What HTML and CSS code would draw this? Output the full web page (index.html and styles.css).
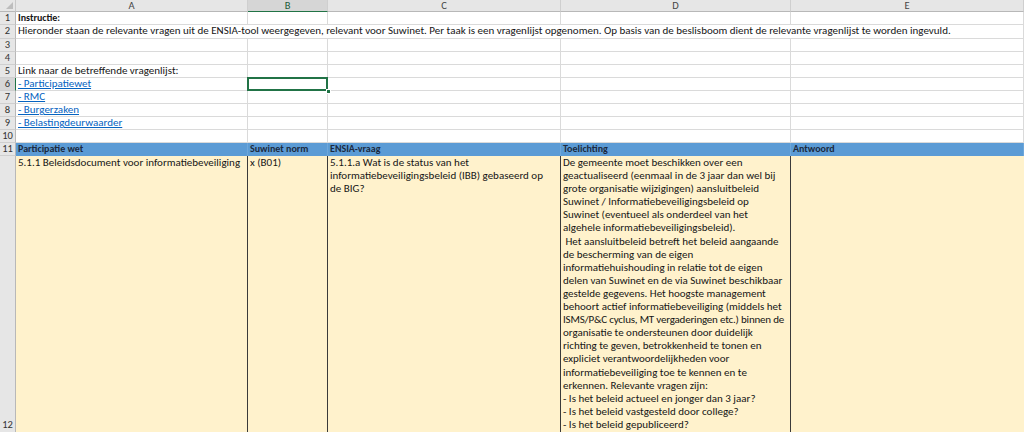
FILE: index.html
```html
<!DOCTYPE html>
<html lang="nl">
<head>
<meta charset="utf-8">
<title>ENSIA Suwinet</title>
<link rel="stylesheet" href="styles.css">
</head>
<body>
<div class="sheet">
  <div class="corner"><span class="tri"></span></div>
  <div class="ch">A</div>
  <div class="ch ch-sel">B</div>
  <div class="ch">C</div>
  <div class="ch">D</div>
  <div class="ch">E</div>

  <div class="rh">1</div>
  <div class="c bold">Instructie:</div><div class="c"></div><div class="c"></div><div class="c"></div><div class="c"></div>

  <div class="rh">2</div>
  <div class="c span">Hieronder staan de relevante vragen uit de ENSIA-tool weergegeven, relevant voor Suwinet. Per taak is een vragenlijst opgenomen. Op basis van de beslisboom dient de relevante vragenlijst te worden ingevuld.</div>

  <div class="rh">3</div>
  <div class="c"></div><div class="c"></div><div class="c"></div><div class="c"></div><div class="c"></div>

  <div class="rh">4</div>
  <div class="c"></div><div class="c"></div><div class="c"></div><div class="c"></div><div class="c"></div>

  <div class="rh">5</div>
  <div class="c">Link naar de betreffende vragenlijst:</div><div class="c"></div><div class="c"></div><div class="c"></div><div class="c"></div>

  <div class="rh rh-sel">6</div>
  <div class="c"><a class="link" href="#p">- Participatiewet</a></div><div class="c active"><span class="handle"></span></div><div class="c"></div><div class="c"></div><div class="c"></div>

  <div class="rh">7</div>
  <div class="c"><a class="link" href="#r">- RMC</a></div><div class="c"></div><div class="c"></div><div class="c"></div><div class="c"></div>

  <div class="rh">8</div>
  <div class="c"><a class="link" href="#b">- Burgerzaken</a></div><div class="c"></div><div class="c"></div><div class="c"></div><div class="c"></div>

  <div class="rh">9</div>
  <div class="c"><a class="link" href="#d">- Belastingdeurwaarder</a></div><div class="c"></div><div class="c"></div><div class="c"></div><div class="c"></div>

  <div class="rh">10</div>
  <div class="c"></div><div class="c"></div><div class="c"></div><div class="c"></div><div class="c"></div>

  <div class="rh">11</div>
  <div class="c hd">Participatie wet</div><div class="c hd">Suwinet norm</div><div class="c hd">ENSIA-vraag</div><div class="c hd">Toelichting</div><div class="c hd">Antwoord</div>

  <div class="rh rh-big">12</div>
  <div class="c data">5.1.1 Beleidsdocument voor informatiebeveiliging</div>
  <div class="c data">x (B01)</div>
  <div class="c data">5.1.1.a Wat is de status van het<br>informatiebeveiligingsbeleid (IBB) gebaseerd op<br>de BIG?</div>
  <div class="c data">De gemeente moet beschikken over een<br>geactualiseerd (eenmaal in de 3 jaar dan wel bij<br>grote organisatie wijzigingen) aansluitbeleid<br>Suwinet / Informatiebeveiligingsbeleid op<br>Suwinet (eventueel als onderdeel van het<br>algehele informatiebeveiligingsbeleid).<br>&nbsp;Het aansluitbeleid betreft het beleid aangaande<br>de bescherming van de eigen<br>informatiehuishouding in relatie tot de eigen<br>delen van Suwinet en de via Suwinet beschikbaar<br>gestelde gegevens. Het hoogste management<br>behoort actief informatiebeveiliging (middels het<br><span class="tight">ISMS/P&amp;C cyclus, MT vergaderingen etc.) binnen de</span><br>organisatie te ondersteunen door duidelijk<br>richting te geven, betrokkenheid te tonen en<br>expliciet verantwoordelijkheden voor<br>informatiebeveiliging toe te kennen en te<br>erkennen. Relevante vragen zijn:<br>- Is het beleid actueel en jonger dan 3 jaar?<br>- Is het beleid vastgesteld door college?<br>- Is het beleid gepubliceerd?</div>
  <div class="c data last"></div>
</div>
</body>
</html>
```

FILE: styles.css
```css
* { box-sizing: border-box; }

html, body {
  margin: 0;
  padding: 0;
  background: #ffffff;
  overflow: hidden;
}

body {
  font-family: Carlito, Calibri, Lato, sans-serif;
  font-size: 11px;
  color: #161616;
  width: 1024px;
  height: 432px;
}

.sheet {
  display: grid;
  grid-template-columns: 16px 232px 80px 233px 230px 233px;
  grid-template-rows: 12px 13px 14px repeat(9, 13px) 277px;
}

.corner {
  background: #e6e6e6;
  border-right: 1px solid #c8c8c8;
  border-bottom: 1px solid #b8b8b8;
  position: relative;
}

.tri {
  position: absolute;
  right: 2px;
  bottom: 2px;
  width: 0;
  height: 0;
  border-left: 7px solid transparent;
  border-bottom: 7px solid #bdbdbd;
}

.ch {
  background: #e6e6e6;
  color: #444;
  text-align: center;
  line-height: 11px;
  font-size: 10.5px;
  border-right: 1px solid #cfcfcf;
  border-bottom: 1px solid #b8b8b8;
}

.ch-sel {
  background: #d6d6d6;
  border-bottom: 1px solid #217346;
  color: #1d5c38;
}

.rh {
  background: #e6e6e6;
  color: #333;
  text-align: center;
  font-size: 10.5px;
  line-height: 12px;
  border-right: 1px solid #b8b8b8;
  border-bottom: 1px solid #cfcfcf;
  white-space: nowrap;
  overflow: hidden;
}

.rh-sel {
  background: #d6d6d6;
  border-right: 1px solid #217346;
}

.rh-big {
  display: flex;
  align-items: flex-end;
  justify-content: center;
  padding-bottom: 1px;
}

.c {
  border-right: 1px solid #dadada;
  border-bottom: 1px solid #dadada;
  padding: 0 2px;
  line-height: 12px;
  white-space: nowrap;
  overflow: hidden;
  position: relative;
}

.bold {
  font-weight: 700;
  font-size: 10px;
}

.span {
  grid-column: 2 / -1;
  overflow: visible;
}

.link {
  color: #0563c1;
  text-decoration: underline;
}

.active {
  overflow: visible;
  z-index: 2;
}

.active::before {
  content: "";
  position: absolute;
  left: -1px;
  top: -1px;
  right: -1px;
  bottom: -1px;
  border: 2px solid #217346;
}

.handle {
  position: absolute;
  right: -4px;
  bottom: -4px;
  width: 5px;
  height: 5px;
  background: #217346;
  border: 1px solid #ffffff;
}

.hd {
  background: #5b9bd5;
  color: #1c2a40;
  font-weight: 700;
  font-size: 10px;
  border-right: 1px solid #6ea7da;
  border-bottom: none;
}

.data {
  background: #fff2cc;
  line-height: 13.1px;
  padding-top: 0;
  border-right: 1px solid #3a3a3a;
  border-bottom: none;
}

.tight {
  letter-spacing: -0.2px;
}

.last {
  border-right: none;
}
```
